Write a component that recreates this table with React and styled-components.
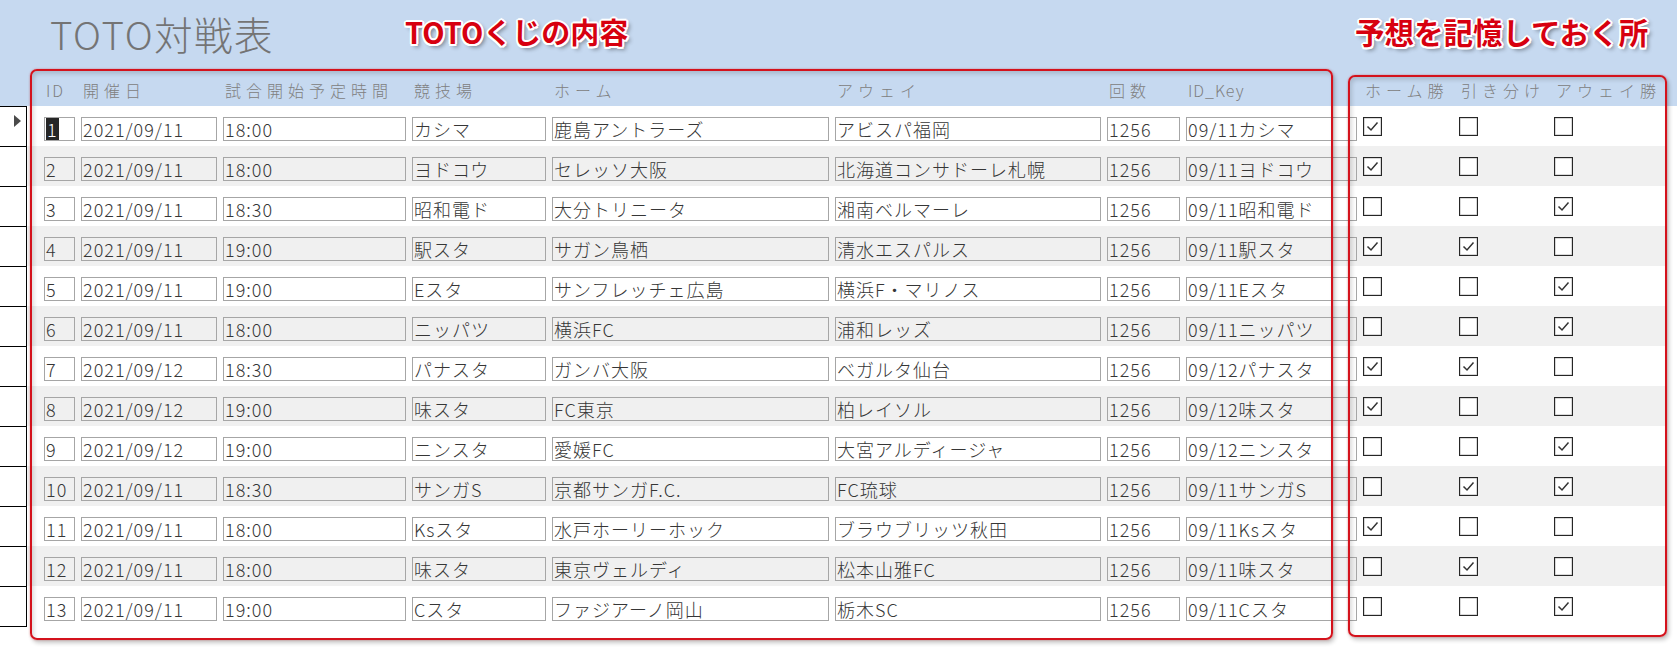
import React from 'react';
import styled, { createGlobalStyle } from 'styled-components';

const COLS = '31px 136px 183px 134px 277px 266px 73px 171px 90px 89px 96px';

const matches = [
  { id: 1, date: '2021/09/11', time: '18:00', venue: 'カシマ', home: '鹿島アントラーズ', away: 'アビスパ福岡', picks: [1, 0, 0] },
  { id: 2, date: '2021/09/11', time: '18:00', venue: 'ヨドコウ', home: 'セレッソ大阪', away: '北海道コンサドーレ札幌', picks: [1, 0, 0] },
  { id: 3, date: '2021/09/11', time: '18:30', venue: '昭和電ド', home: '大分トリニータ', away: '湘南ベルマーレ', picks: [0, 0, 1] },
  { id: 4, date: '2021/09/11', time: '19:00', venue: '駅スタ', home: 'サガン鳥栖', away: '清水エスパルス', picks: [1, 1, 0] },
  { id: 5, date: '2021/09/11', time: '19:00', venue: 'Eスタ', home: 'サンフレッチェ広島', away: '横浜F・マリノス', picks: [0, 0, 1] },
  { id: 6, date: '2021/09/11', time: '18:00', venue: 'ニッパツ', home: '横浜FC', away: '浦和レッズ', picks: [0, 0, 1] },
  { id: 7, date: '2021/09/12', time: '18:30', venue: 'パナスタ', home: 'ガンバ大阪', away: 'ベガルタ仙台', picks: [1, 1, 0] },
  { id: 8, date: '2021/09/12', time: '19:00', venue: '味スタ', home: 'FC東京', away: '柏レイソル', picks: [1, 0, 0] },
  { id: 9, date: '2021/09/12', time: '19:00', venue: 'ニンスタ', home: '愛媛FC', away: '大宮アルディージャ', picks: [0, 0, 1] },
  { id: 10, date: '2021/09/11', time: '18:30', venue: 'サンガS', home: '京都サンガF.C.', away: 'FC琉球', picks: [0, 1, 1] },
  { id: 11, date: '2021/09/11', time: '18:00', venue: 'Ksスタ', home: '水戸ホーリーホック', away: 'ブラウブリッツ秋田', picks: [1, 0, 0] },
  { id: 12, date: '2021/09/11', time: '18:00', venue: '味スタ', home: '東京ヴェルディ', away: '松本山雅FC', picks: [0, 1, 0] },
  { id: 13, date: '2021/09/11', time: '19:00', venue: 'Cスタ', home: 'ファジアーノ岡山', away: '栃木SC', picks: [0, 0, 1] },
];

const labels = [
  ['ID', 2],
  ['開催日', 5],
  ['試合開始予定時間', 5],
  ['競技場', 5],
  ['ホーム', 5],
  ['アウェイ', 5],
  ['回数', 5],
  ['ID_Key', 1],
  ['ホーム勝', 5],
  ['引き分け', 5],
  ['アウェイ勝', 5],
];

export default function App() {
  return (
    <Page>
      <GlobalStyle />
      <Header>
        <TitleRow>
          <Title>TOTO対戦表</Title>
          <Note $size={29}>TOTOくじの内容</Note>
          <Note $size={29.5}>予想を記憶しておく所</Note>
        </TitleRow>
        <LabelRow>
          {labels.map(([text, spacing]) => (
            <Label key={text} $spacing={spacing}>{text}</Label>
          ))}
        </LabelRow>
      </Header>

      <Body>
        <Selectors>
          {matches.map((m, i) => (
            <SelectorCell key={m.id}>{i === 0 && <Arrow />}</SelectorCell>
          ))}
        </Selectors>
        <Rows>
          {matches.map((m, i) => (
            <Row key={m.id} $alt={i % 2 === 1}>
              <Field>{i === 0 ? <Selected>1</Selected> : m.id}</Field>
              <Field>{m.date}</Field>
              <Field>{m.time}</Field>
              <Field>{m.venue}</Field>
              <Field>{m.home}</Field>
              <Field>{m.away}</Field>
              <Field>1256</Field>
              <Field>{m.date.slice(5) + m.venue}</Field>
              {m.picks.map((p, k) => (
                <Check key={k}>
                  {p === 1 && (
                    <svg width="17" height="17" viewBox="0 0 17 17">
                      <polyline points="3.5,8.5 7,12 13.5,4.5" fill="none" stroke="#333" strokeWidth="1.5" />
                    </svg>
                  )}
                </Check>
              ))}
            </Row>
          ))}
        </Rows>
      </Body>

      <Frame $x={30} $y={69} $w={1303} $h={571} />
      <Frame $x={1348} $y={75} $w={319} $h={562} />
    </Page>
  );
}

const GlobalStyle = createGlobalStyle`
  body {
    margin: 0;
    background: #fff;
    font-family: "Noto Sans CJK JP", "Noto Sans", sans-serif;
  }
`;

const Page = styled.div`
  position: relative;
  width: 1677px;
  height: 650px;
  overflow: hidden;
  background: #fff;
`;

const Header = styled.div`
  background: #c6d9f0;
  height: 106px;
`;

const TitleRow = styled.div`
  height: 66px;
  display: grid;
  grid-template-columns: 405px 950px 1fr;
  align-items: center;
`;

const Title = styled.h1`
  margin: 0;
  padding-left: 50px;
  font-size: 38.5px;
  font-weight: 300;
  color: #747474;
  letter-spacing: 1.5px;
  white-space: nowrap;
`;

const Note = styled.div`
  font-size: ${(p) => p.$size}px;
  font-weight: 700;
  color: #d7000f;
  white-space: nowrap;
  margin-top: -4px;
  text-shadow:
    -2px 0 0 #fff, 2px 0 0 #fff, 0 -2px 0 #fff, 0 2px 0 #fff,
    -1.5px -1.5px 0 #fff, 1.5px -1.5px 0 #fff, -1.5px 1.5px 0 #fff, 1.5px 1.5px 0 #fff,
    3px 3px 4px rgba(0, 0, 0, 0.45);
`;

const LabelRow = styled.div`
  height: 40px;
  box-sizing: border-box;
  padding: 8px 0 0 44px;
  display: grid;
  grid-template-columns: ${COLS};
  column-gap: 6px;
`;

const Label = styled.div`
  font-size: 16px;
  font-weight: 300;
  line-height: 32px;
  padding-left: 2px;
  color: #808080;
  letter-spacing: ${(p) => p.$spacing}px;
  white-space: nowrap;
`;

const Body = styled.div`
  display: flex;
`;

const Selectors = styled.div`
  width: 27px;
  display: flex;
  flex-direction: column;
`;

const SelectorCell = styled.div`
  height: 40px;
  box-sizing: border-box;
  border-top: 1px solid #000;
  border-right: 1px solid #000;
  padding: 8px 0 0 14px;

  &:last-child {
    height: 41px;
    border-bottom: 1px solid #000;
  }
`;

const Arrow = styled.div`
  width: 0;
  height: 0;
  border-left: 7px solid #4a4a4a;
  border-top: 6px solid transparent;
  border-bottom: 6px solid transparent;
`;

const Rows = styled.div`
  width: 1639px;
  display: flex;
  flex-direction: column;
`;

const Row = styled.div`
  height: 40px;
  box-sizing: border-box;
  padding: 11px 0 0 17px;
  display: grid;
  grid-template-columns: ${COLS};
  column-gap: 6px;
  align-items: start;
  background: ${(p) => (p.$alt ? '#f0f0f0' : '#fff')};
`;

const Field = styled.div`
  height: 24px;
  box-sizing: border-box;
  border: 1px solid #a6a6a6;
  padding-left: 1px;
  font-size: 18px;
  font-weight: 300;
  line-height: 22px;
  letter-spacing: 1px;
  color: #363636;
  white-space: nowrap;
  overflow: hidden;
`;

const Selected = styled.span`
  display: inline-block;
  height: 22px;
  padding: 0 1px;
  background: #262626;
  color: #fff;
`;

const Check = styled.div`
  width: 19px;
  height: 19px;
  box-sizing: border-box;
  border: 1px solid #262626;
  box-shadow: inset 0 0 0 0.5px rgba(0, 0, 0, 0.3);
  background: #fff;
  display: flex;
  align-items: center;
  justify-content: center;
`;

const Frame = styled.div`
  position: absolute;
  left: ${(p) => p.$x}px;
  top: ${(p) => p.$y}px;
  width: ${(p) => p.$w}px;
  height: ${(p) => p.$h}px;
  box-sizing: border-box;
  border: 2px solid #d4121c;
  border-radius: 7px;
  pointer-events: none;
  box-shadow:
    2px 3px 4px rgba(0, 0, 0, 0.22),
    inset 2px 3px 4px rgba(0, 0, 0, 0.14),
    0 0 2px rgba(230, 40, 40, 0.5);
`;
